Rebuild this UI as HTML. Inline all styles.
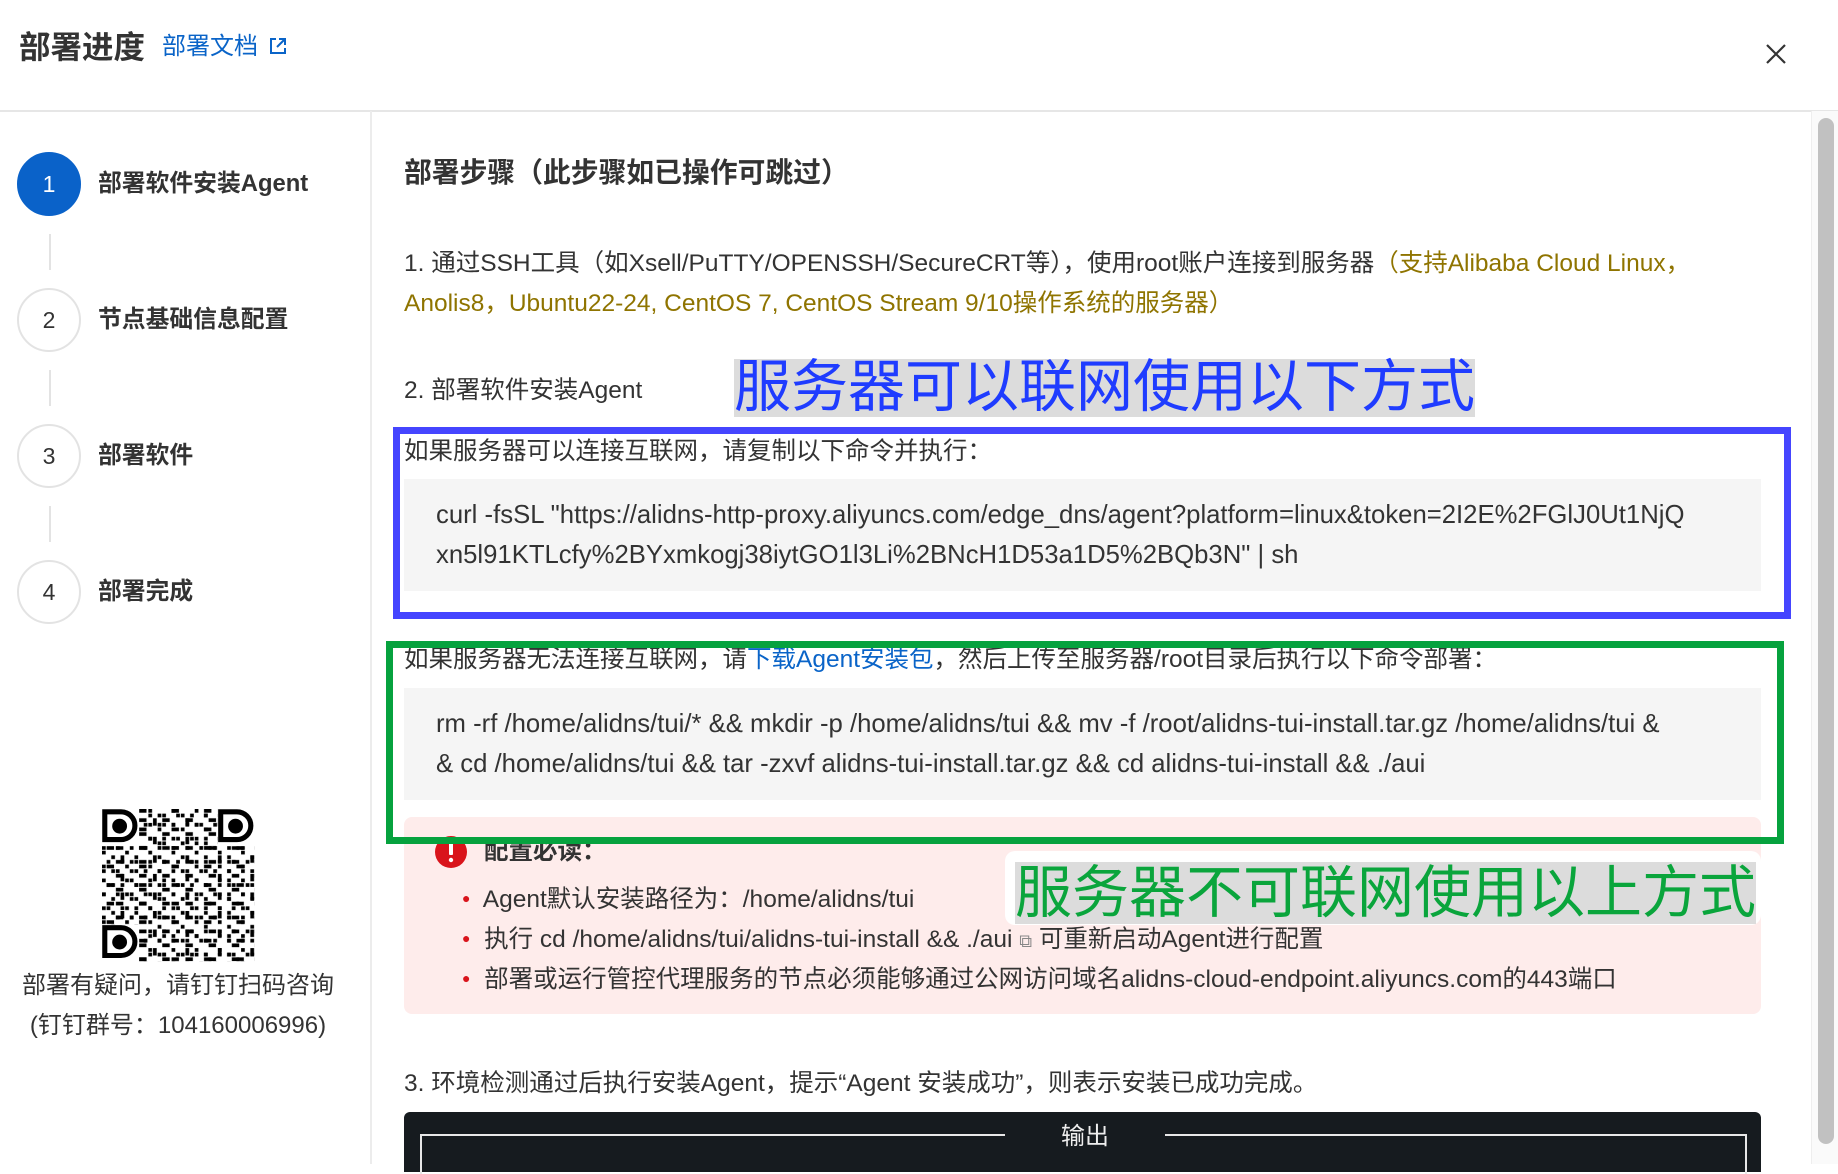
<!DOCTYPE html>
<html><head><meta charset="utf-8"><style>
*{margin:0;padding:0;box-sizing:border-box}
body{width:1838px;height:1164px;overflow:hidden;background:#fff;font-family:"Liberation Sans","Noto Sans CJK SC",sans-serif;color:#333;position:relative}
.a{position:absolute;white-space:nowrap}
.circ{position:absolute;left:17px;width:64px;height:64px;border-radius:50%;border:2px solid #e3e3e3;text-align:center;line-height:60px;font-size:23px;color:#333;background:#fff}
.step{position:absolute;left:98px;font-size:23.8px;font-weight:bold;color:#333;line-height:30px}
.vl{position:absolute;left:49px;width:2px;height:36px;background:#e3e3e3}
.t{font-size:24.5px;line-height:30px}
.code{position:absolute;left:404px;width:1357px;background:#f5f5f5;font-size:25.7px;line-height:40px;padding-left:32px;color:#333}
</style></head><body>
<div class="a" style="left:19px;top:27px;font-size:31.5px;font-weight:bold;color:#333;line-height:40px">部署进度</div>
<div class="a" style="left:162px;top:30px;font-size:24px;color:#0a64c8;line-height:34px">部署文档</div>
<svg class="a" style="left:268px;top:36px" width="20" height="20" viewBox="0 0 20 20" fill="none" stroke="#0a64c8" stroke-width="2"><path d="M8 3H3v14h14v-5"/><path d="M11 3h6v6M17 3l-8 8"/></svg>
<svg class="a" style="left:1765px;top:43px" width="22" height="22" viewBox="0 0 22 22" stroke="#333" stroke-width="2.2"><path d="M2 2L20 20M20 2L2 20"/></svg>
<div class="a" style="left:0;top:110px;width:1838px;height:2px;background:#e6e6e6"></div>
<div class="a" style="left:370px;top:111px;width:2px;height:1053px;background:#ececec"></div>
<div class="a" style="left:1811px;top:111px;width:27px;height:1053px;background:#fafafa;border-left:1px solid #eee"></div>
<div class="a" style="left:1818px;top:118px;width:16px;height:1026px;background:#c1c1c1;border-radius:8px"></div>

<div class="circ" style="top:152px;background:#0a62c9;border-color:#0a62c9;color:#fff">1</div>
<div class="step" style="top:169px">部署软件安装Agent</div>
<div class="vl" style="top:234px"></div>
<div class="circ" style="top:288px">2</div>
<div class="step" style="top:305px">节点基础信息配置</div>
<div class="vl" style="top:370px"></div>
<div class="circ" style="top:424px">3</div>
<div class="step" style="top:441px">部署软件</div>
<div class="vl" style="top:506px"></div>
<div class="circ" style="top:560px">4</div>
<div class="step" style="top:577px">部署完成</div>

<svg class="a" style="left:101px;top:809px" width="155" height="153" viewBox="0 0 33 33">
<defs>
<pattern id="p1" width="5" height="3" patternUnits="userSpaceOnUse"><rect x="0" y="0" width="0.8" height="0.8"/><rect x="2" y="1" width="0.8" height="0.8"/><rect x="3" y="2" width="1.6" height="0.8"/></pattern>
<pattern id="p2" width="7" height="4" patternUnits="userSpaceOnUse"><rect x="1" y="0" width="1.6" height="0.8"/><rect x="4" y="2" width="0.8" height="1.6"/><rect x="6" y="3" width="0.8" height="0.8"/></pattern>
<pattern id="p3" width="3" height="5" patternUnits="userSpaceOnUse"><rect x="1" y="1" width="0.8" height="0.8"/><rect x="0" y="3" width="0.8" height="0.8"/></pattern>
</defs>
<rect x="0" y="0" width="33" height="33" fill="url(#p1)"/><rect x="0" y="0" width="33" height="33" fill="url(#p2)"/><rect x="0" y="0" width="33" height="33" fill="url(#p3)"/>
<g fill="#fff"><rect x="0" y="0" width="8" height="8"/><rect x="25" y="0" width="8" height="8"/><rect x="0" y="25" width="8" height="8"/></g>
<g fill="none" stroke="#000" stroke-width="1.1"><path d="M0.6 0.6h3.5a3 3 0 0 1 3 3v0a3 3 0 0 1-3 3H0.6z"/><path d="M25.6 0.6h3.5a3 3 0 0 1 3 3v0a3 3 0 0 1-3 3h-3.5z"/><path d="M0.6 25.6h3.5a3 3 0 0 1 3 3v0a3 3 0 0 1-3 3H0.6z"/></g>
<circle cx="3.8" cy="3.7" r="1.6"/><circle cx="28.8" cy="3.7" r="1.6"/><circle cx="3.8" cy="28.7" r="1.6"/>
</svg>
<div class="a" style="left:0;width:356px;text-align:center;top:970px;font-size:24px;line-height:32px;color:#333">部署有疑问，请钉钉扫码咨询</div>
<div class="a" style="left:0;width:356px;text-align:center;top:1010px;font-size:24px;line-height:32px;color:#333">(钉钉群号：104160006996)</div>

<div class="a" style="left:404px;top:156px;font-size:27.8px;font-weight:bold;line-height:34px;color:#333">部署步骤（此步骤如已操作可跳过）</div>
<div class="a t" style="left:404px;top:249px">1. 通过SSH工具（如Xsell/PuTTY/OPENSSH/SecureCRT等），使用root账户连接到服务器<span style="color:#8f7400">（支持Alibaba Cloud Linux，</span></div>
<div class="a t" style="left:404px;top:289px;color:#8f7400">Anolis8，Ubuntu22-24, CentOS 7, CentOS Stream 9/10操作系统的服务器）</div>
<div class="a t" style="left:404px;top:376px">2. 部署软件安装Agent</div>

<div class="a" style="left:734px;top:359px;width:741px;height:58px;background:#dcdcdc"></div>
<div class="a" style="left:734px;top:351px;font-size:57px;line-height:72px;color:#1f3cff">服务器可以联网使用以下方式</div>

<div class="a" style="left:393px;top:427px;width:1398px;height:192px;border:7px solid #4545ff"></div>
<div class="a t" style="left:404px;top:437px">如果服务器可以连接互联网，请复制以下命令并执行：</div>
<div class="code" style="top:479px;height:112px;padding-top:16px">curl -fsSL "https://alidns-http-proxy.aliyuncs.com/edge_dns/agent?platform=linux&amp;token=2I2E%2FGlJ0Ut1NjQ<br>xn5l91KTLcfy%2BYxmkogj38iytGO1l3Li%2BNcH1D53a1D5%2BQb3N" | sh</div>

<div class="a t" style="left:404px;top:645px">如果服务器无法连接互联网，请<span style="color:#0a64c8">下载Agent安装包</span>，然后上传至服务器/root目录后执行以下命令部署：</div>
<div class="code" style="top:688px;height:112px;padding-top:16px">rm -rf /home/alidns/tui/* &amp;&amp; mkdir -p /home/alidns/tui &amp;&amp; mv -f /root/alidns-tui-install.tar.gz /home/alidns/tui &amp;<br>&amp; cd /home/alidns/tui &amp;&amp; tar -zxvf alidns-tui-install.tar.gz &amp;&amp; cd alidns-tui-install &amp;&amp; ./aui</div>

<div class="a" style="left:404px;top:817px;width:1357px;height:197px;background:#feeceb;border-radius:8px"></div>
<svg class="a" style="left:435px;top:836px" width="32" height="32" viewBox="0 0 32 32"><circle cx="16" cy="16" r="16" fill="#d9141b"/><rect x="14" y="6" width="4" height="13" rx="1" fill="#fff"/><circle cx="16" cy="24" r="2.2" fill="#fff"/></svg>
<div class="a t" style="left:484px;top:837px;font-weight:bold">配置必读：</div>
<div class="a t" style="left:462px;top:885px"><span style="color:#d9141b;font-size:14px;position:relative;top:-4px">●</span>&nbsp; Agent默认安装路径为：/home/alidns/tui</div>

<div class="a" style="left:1005px;top:851px;width:756px;height:74px;background:#fff;border-radius:10px"></div>
<div class="a" style="left:1015px;top:862px;width:741px;height:62px;background:#dcdcdc"></div>
<div class="a" style="left:1015px;top:857px;font-size:57px;line-height:72px;color:#0aa53c;height:68px;overflow:hidden">服务器不可联网使用以上方式</div>

<div class="a t" style="left:462px;top:925px"><span style="color:#d9141b;font-size:14px;position:relative;top:-4px">●</span>&nbsp; 执行 cd /home/alidns/tui/alidns-tui-install &amp;&amp; ./aui <span style="color:#888;font-size:18px">⧉</span> 可重新启动Agent进行配置</div>
<div class="a t" style="left:462px;top:965px"><span style="color:#d9141b;font-size:14px;position:relative;top:-4px">●</span>&nbsp; 部署或运行管控代理服务的节点必须能够通过公网访问域名alidns-cloud-endpoint.aliyuncs.com的443端口</div>

<div class="a" style="left:386px;top:641px;width:1398px;height:203px;border:7px solid #06a23e"></div>

<div class="a t" style="left:404px;top:1069px">3. 环境检测通过后执行安装Agent，提示“Agent 安装成功”，则表示安装已成功完成。</div>
<div class="a" style="left:404px;top:1112px;width:1357px;height:60px;background:#161b1f;border-radius:6px 6px 0 0"></div>
<div class="a" style="left:420px;top:1134px;width:1327px;height:40px;border:2px solid #e8e8e8;border-bottom:none"></div>
<div class="a" style="left:1005px;top:1120px;width:160px;height:30px;background:#161b1f"></div>
<div class="a" style="left:1005px;top:1120px;width:160px;text-align:center;font-size:24px;line-height:34px;color:#eee">输出</div>
</body></html>
